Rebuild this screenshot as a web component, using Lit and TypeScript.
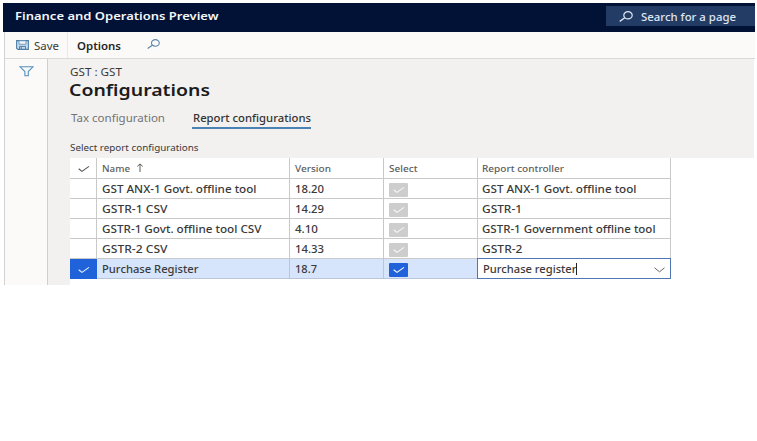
import { LitElement, html, css, svg, nothing } from "lit";
import { customElement, property } from "lit/decorators.js";

/** One line of real text set to a given width, like an extended typeface. */
@customElement("wide-text")
class WideText extends LitElement {
  @property() text = "";
  @property({ type: Number }) w = 0;
  static styles = css`
    :host { display: block; flex: none; height: 16px; }
    svg { display: block; overflow: visible; }
    text { fill: currentColor; white-space: pre; }
  `;
  render() {
    return html`<svg width=${this.w} height="16">
      <text x="0" y="12" textLength=${this.w} lengthAdjust="spacingAndGlyphs">${this.text}</text>
    </svg>`;
  }
}

interface Row {
  name: [string, number];
  version: [string, number];
  controller: [string, number];
  active?: boolean;
}

const ROWS: Row[] = [
  { name: ["GST ANX-1 Govt. offline tool", 154.5], version: ["18.20", 29], controller: ["GST ANX-1 Govt. offline tool", 154.5] },
  { name: ["GSTR-1 CSV", 65.5], version: ["14.29", 29], controller: ["GSTR-1", 40] },
  { name: ["GSTR-1 Govt. offline tool CSV", 159.5], version: ["4.10", 23], controller: ["GSTR-1 Government offline tool", 173.5] },
  { name: ["GSTR-2 CSV", 65.5], version: ["14.33", 29], controller: ["GSTR-2", 40.5] },
  { name: ["Purchase Register", 96.5], version: ["18.7", 22], controller: ["Purchase register", 93.5], active: true },
];

const tick = (cls = "") => html`<svg class="tick ${cls}" width="12" height="8" viewBox="0 0 12 8">
  ${svg`<path d="M.7 3.8 4 6.4 11 1.4" fill="none" stroke="currentColor" stroke-width="1.1"/>`}
</svg>`;

const lens = (w: number, h: number) => html`<svg width=${w} height=${h} viewBox="0 0 14 11" preserveAspectRatio="none">
  ${svg`<ellipse cx="9" cy="4.3" rx="4.2" ry="3.6" fill="none" stroke="currentColor" stroke-width="1.2"/>
  <path d="M5.8 6.8.7 10.4" fill="none" stroke="currentColor" stroke-width="1.3"/>`}
</svg>`;

@customElement("app-root")
class AppRoot extends LitElement {
  static styles = css`
    :host {
      display: block; box-sizing: border-box; width: 757px; height: 441px; padding: 3px 2px 0 3px;
      overflow: hidden; background: #fff; color: #3a3a3a;
      font: 10px "Noto Sans", "Open Sans", sans-serif;
    }
    * { box-sizing: border-box; }
    svg { display: block; flex: none; }
    .top { display: flex; height: 29px; background: #011236; color: #f4f6fa; justify-content: space-between; padding: 3px 0 0 12px; }
    .brand { font-weight: 600; margin-top: 2px; }
    .search { display: flex; width: 149px; height: 20px; background: #233c66; padding: 5px 0 0 13px; color: #dfe6f2; }
    .search wide-text { margin: -2px 0 0 8px; font-weight: 500; }
    .shell { margin-left: 1px; border-left: 1px solid #d3d2d1; }
    .bar { display: flex; height: 27px; background: #fbfaf9; border-bottom: 1px solid #dad9d8; padding: 6px 0 0 11px; }
    .bar wide-text { margin-left: 4.5px; }
    .sep { width: 1px; height: 26px; margin: -6px 0 0 8px; background: #eae9e8; }
    .bar .options { margin-left: 9.5px; font-weight: 600; color: #262626; }
    .find { margin: 1px 0 0 25.5px; color: #5a87ae; }
    .save { margin-top: 2px; }
    .body { display: flex; height: 226px; }
    .side { width: 43px; background: #fbfaf9; border-right: 1px solid #cfcfce; padding: 7px 0 0 14px; }
    .main { flex: none; width: 706px; background: linear-gradient(#f2f1f0, #f2f1f0) 0 0 / 100% 99px no-repeat, linear-gradient(#f2f1f0, #f2f1f0) 0 0 / 22px 100% no-repeat; padding-left: 22px; }
    .crumb { padding-top: 5px; height: 17px; }
    .title { font-size: 15.5px; font-weight: 600; color: #1c1c1c; height: 27px; padding-top: 8px; margin-left: -.7px; }
    .tabs { display: flex; height: 35px; padding: 7px 0 0 1px; }
    .tabs .off { color: #747474; }
    .tab { margin-left: 26.5px; padding-left: 1px; height: 18.5px; border-bottom: 2px solid #4a83b3; width: 119px; font-weight: 500; color: #333; }
    .caption { height: 20px; padding-top: 1px; font-size: 9px; }
    .grid { display: grid; width: 601px; grid-template-columns: 27px 193px 94px 94px 193px; grid-template-rows: 21px repeat(5, 20px); }
    .cell { display: flex; background: #fff; border-right: 1px solid #c9c9c9; border-bottom: 1px solid #c9c9c9; padding: 1.5px 0 0 5px; font-weight: 500; }
    .cell:nth-child(5n) { padding-left: 4px; }
    .cell.head { color: #5c5c5c; font-size: 9px; font-weight: 500; padding-top: 2px; }
    .cell.mark, .cell.head.mark { padding: 6.5px 0 0 7.5px; color: #555; }
    .on { background: #d6e4fc; border-color: #b9c5da; }
    .cell.on.mark { background: #1f62d9; color: #e9f1ff; border-color: #1f62d9; }
    .box { width: 19px; height: 14px; margin-top: 2px; background: #cdcdcd; color: #f7f7f7; padding: 3px 0 0 4px; border-radius: 1px; }
    .on .box { background: #1f62d9; color: #fff; }
    .cell.edit { border: 1px solid #5077b4; margin: -1px 0 0 -1px; background: #fff; padding-left: 4.5px; }
    .caret { width: 1px; height: 12px; background: #222; margin: 2.5px 77px 0 0; }
    .chev { margin-top: 6px; color: #666; }
    .up { margin: 3px 0 0 6px; }
  `;

  private row(r: Row) {
    const on = r.active ? "on" : "";
    return html`
      <div class="cell mark ${on}">${r.active ? tick() : nothing}</div>
      <div class="cell ${on}"><wide-text .text=${r.name[0]} .w=${r.name[1]}></wide-text></div>
      <div class="cell ${on}"><wide-text .text=${r.version[0]} .w=${r.version[1]}></wide-text></div>
      <div class="cell ${on}"><div class="box">${tick()}</div></div>
      <div class="cell ${r.active ? "edit" : ""}">
        <wide-text .text=${r.controller[0]} .w=${r.controller[1]}></wide-text>
        ${r.active
          ? html`<i class="caret"></i><svg class="chev" width="11" height="6" viewBox="0 0 11 6"><path d="M.5 .8 5.5 4.8 10.5 .8" fill="none" stroke="currentColor"/></svg>`
          : nothing}
      </div>`;
  }

  render() {
    return html`
      <header class="top">
        <wide-text class="brand" text="Finance and Operations Preview" w="203.5"></wide-text>
        <div class="search">${lens(14, 11)}<wide-text text="Search for a page" w="95"></wide-text></div>
      </header>
      <div class="shell">
        <nav class="bar">
          <svg class="save" width="13" height="10" viewBox="0 0 13 10">
            <path d="M.6.6h11.8v8.8H2L.6 8.2z" fill="#c6dbec" stroke="#4f7fa9" stroke-width="1.1"/>
            <path d="M3 .8h7v3.4H3z" fill="#f4f9fd" stroke="#5d8bb3" stroke-width=".8"/>
            <path d="M3.5 9.2V6.4h6v2.8M5.3 7v2" fill="none" stroke="#4f7fa9"/>
          </svg>
          <wide-text text="Save" w="25"></wide-text>
          <i class="sep"></i>
          <wide-text class="options" text="Options" w="44"></wide-text>
          <span class="find">${lens(13, 10)}</span>
        </nav>
        <div class="body">
          <aside class="side">
            <svg width="15" height="11" viewBox="0 0 15 11">
              <path d="M1 .8h13L9.3 5.5v4.3H5.9V5.5z" fill="#f4f9fd" stroke="#5a8fb8" stroke-width="1.1"/>
            </svg>
          </aside>
          <main class="main">
            <div class="crumb"><wide-text text="GST : GST" w="52"></wide-text></div>
            <div class="title"><wide-text text="Configurations" w="141"></wide-text></div>
            <div class="tabs">
              <wide-text class="off" text="Tax configuration" w="94"></wide-text>
              <div class="tab"><wide-text text="Report configurations" w="118"></wide-text></div>
            </div>
            <div class="caption"><wide-text text="Select report configurations" w="128.5"></wide-text></div>
            <div class="grid">
              <div class="cell head mark">${tick()}</div>
              <div class="cell head"><wide-text text="Name" w="28"></wide-text>
                <svg class="up" width="8" height="9" viewBox="0 0 8 9"><path d="M4 9V1M1.3 3.4 4 .9 6.7 3.4" fill="none" stroke="currentColor"/></svg>
              </div>
              <div class="cell head"><wide-text text="Version" w="36"></wide-text></div>
              <div class="cell head"><wide-text text="Select" w="28.5"></wide-text></div>
              <div class="cell head"><wide-text text="Report controller" w="82"></wide-text></div>
              ${ROWS.map((r) => this.row(r))}
            </div>
          </main>
        </div>
      </div>`;
  }
}
